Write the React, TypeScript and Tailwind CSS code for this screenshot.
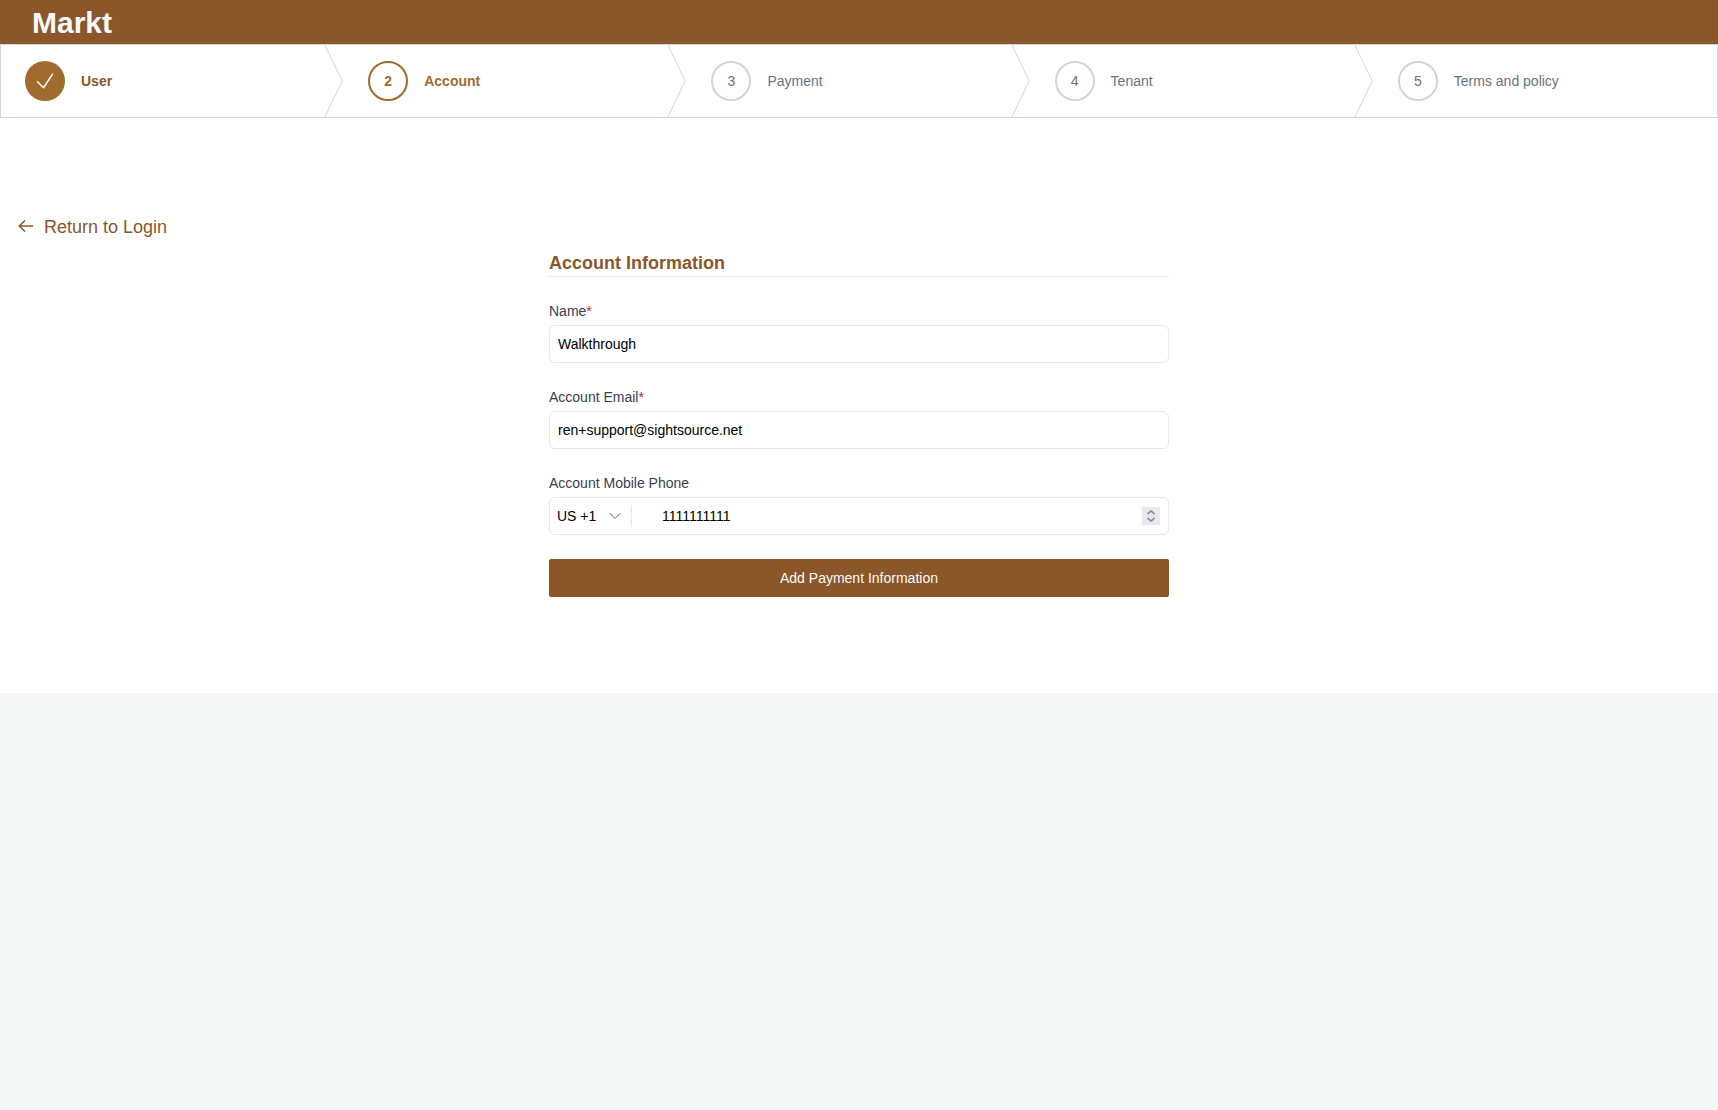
import React, { useRef } from "react";

type StepState = "done" | "current" | "upcoming";

const steps: { label: string; state: StepState }[] = [
  { label: "User", state: "done" },
  { label: "Account", state: "current" },
  { label: "Payment", state: "upcoming" },
  { label: "Tenant", state: "upcoming" },
  { label: "Terms and policy", state: "upcoming" },
];

const circleStyles: Record<StepState, string> = {
  done: "bg-[#a16b2e] text-white",
  current: "border-2 border-[#a16b2e] font-semibold text-[#a16b2e]",
  upcoming: "border-2 border-[#d1d5db] text-[#6b7280]",
};

const labelStyles: Record<StepState, string> = {
  done: "font-semibold text-[#8b572a]",
  current: "font-semibold text-[#a16b2e]",
  upcoming: "text-[#6b7280]",
};

function CheckIcon() {
  return (
    <svg className="size-6" viewBox="0 0 24 24" fill="none" stroke="currentColor" strokeWidth="1.5" strokeLinecap="round" strokeLinejoin="round" aria-hidden="true">
      <path d="M4.5 12.75l6 6 9-13.5" />
    </svg>
  );
}

function StepDivider() {
  return (
    <svg className="absolute top-0 right-0 h-full w-5 text-[#d1d5db]" viewBox="0 0 22 80" fill="none" preserveAspectRatio="none" aria-hidden="true">
      <path d="M0 -2L20 40L0 82" vectorEffect="non-scaling-stroke" stroke="currentColor" strokeLinejoin="round" />
    </svg>
  );
}

function Steps() {
  return (
    <nav aria-label="Progress">
      <ol className="flex border border-[#d1d5db]">
        {steps.map((step, i) => (
          <li key={step.label} className="relative flex flex-1">
            <a href="#" aria-current={step.state === "current" ? "step" : undefined} className="flex items-center gap-4 px-6 py-4 text-sm">
              <span className={`flex size-10 shrink-0 items-center justify-center rounded-full ${circleStyles[step.state]}`}>
                {step.state === "done" ? <CheckIcon /> : i + 1}
              </span>
              <span className={labelStyles[step.state]}>{step.label}</span>
            </a>
            {i < steps.length - 1 && <StepDivider />}
          </li>
        ))}
      </ol>
    </nav>
  );
}

function Field({ id, label, required, children }: { id: string; label: string; required?: boolean; children: React.ReactNode }) {
  return (
    <div className="flex flex-col gap-1">
      <label htmlFor={id} className="text-sm text-[#374151]">
        {label}
        {required && <span className="text-[#c81e1e]">*</span>}
      </label>
      {children}
    </div>
  );
}

function SpinButton({ label, path, onClick }: { label: string; path: string; onClick: () => void }) {
  return (
    <button type="button" tabIndex={-1} aria-label={label} onClick={onClick} className="flex h-[9px] w-[18px] items-center justify-center">
      <svg className="h-[9px] w-[18px]" viewBox="0 0 18 9" fill="none" stroke="currentColor" strokeWidth="1.7" aria-hidden="true">
        <path d={path} />
      </svg>
    </button>
  );
}

const inputStyle = "w-full rounded-md border border-[#e5e7eb] bg-white px-2 py-2 text-sm text-black outline-none";

export default function App() {
  const phone = useRef<HTMLInputElement>(null);
  return (
    <div className="min-h-screen bg-[#f5f7f7] font-['Liberation_Sans',Arial,sans-serif]">
      <header className="bg-[#8b572a] px-8 pt-[5px] pb-[3px]">
        <h1 className="text-3xl font-bold text-[#f9fafb]">Markt</h1>
      </header>
      <main className="bg-white pb-24">
        <Steps />
        <div className="px-4 pt-24">
          <a href="#" className="flex h-[26px] w-fit items-center gap-2 text-lg text-[#8b572a]">
            <svg className="size-5" viewBox="0 0 20 20" fill="none" stroke="currentColor" strokeWidth="1.5" aria-hidden="true">
              <path d="M9 3.5L3.3 9L9 14.5M3.3 9H17" />
            </svg>
            Return to Login
          </a>
        </div>
        <form className="mx-auto mt-2.5 flex max-w-[620px] flex-col gap-6" onSubmit={(e) => e.preventDefault()}>
          <h2 className="border-b border-[#e5e7eb] text-lg leading-[26px] font-semibold text-[#8b572a]">Account Information</h2>
          <Field id="name" label="Name" required>
            <input id="name" type="text" defaultValue="Walkthrough" className={inputStyle} />
          </Field>
          <Field id="email" label="Account Email" required>
            <input id="email" type="email" defaultValue="ren+support@sightsource.net" className={inputStyle} />
          </Field>
          <Field id="phone" label="Account Mobile Phone">
            <div className="flex items-center rounded-md border border-[#e5e7eb] bg-white pr-2 pl-[7px]">
              <div className="relative flex h-5 w-[75px] items-center border-r border-[#e5e7eb]">
                <select aria-label="Country code" defaultValue="US" className="w-full appearance-none bg-transparent text-sm text-black outline-none">
                  <option value="US">US +1</option>
                </select>
                <svg className="pointer-events-none absolute right-2 size-4 text-[#8b572a]" viewBox="0 0 24 24" fill="none" stroke="currentColor" strokeWidth="1.5" strokeLinecap="round" strokeLinejoin="round" aria-hidden="true">
                  <path d="M19.5 8.25l-7.5 7.5-7.5-7.5" />
                </svg>
              </div>
              <input
                ref={phone}
                id="phone"
                type="number"
                defaultValue="1111111111"
                className="min-w-0 flex-1 appearance-none bg-transparent py-2 pl-[30px] text-sm text-black outline-none [&::-webkit-inner-spin-button]:appearance-none"
              />
              <div className="flex flex-col bg-[#e9e9ed] text-[#8f8f9d]">
                <SpinButton label="Increase" path="M5.5 7L9 3.8L12.5 7" onClick={() => phone.current?.stepUp()} />
                <SpinButton label="Decrease" path="M5.5 2L9 5.2L12.5 2" onClick={() => phone.current?.stepDown()} />
              </div>
            </div>
          </Field>
          <button type="submit" className="rounded-xs bg-[#8b572a] px-4 py-[9px] text-sm text-[#f9fafb]">
            Add Payment Information
          </button>
        </form>
      </main>
    </div>
  );
}
